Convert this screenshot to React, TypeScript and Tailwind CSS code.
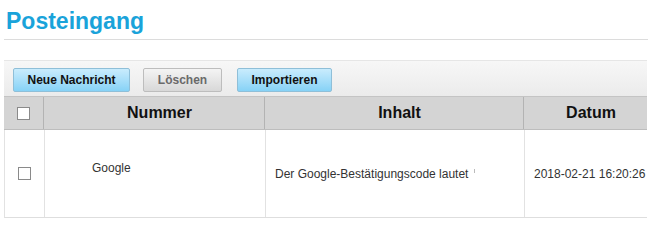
import React from "react";

export default function App() {
  return (
    <div className="w-[650px] h-[220px] bg-white overflow-hidden font-['Liberation_Sans',Arial,sans-serif]">
      <div className="pt-[7px] pl-[6px] h-[35px] text-[23px] leading-[28px] font-bold text-[#1aa3da]">
        Posteingang
      </div>
      <div className="mt-[4px] ml-[4px] mr-[2px] h-px bg-[#dcdcdc]" />
      <div className="mt-[20px] ml-[4px] mr-[3px]">
        <div className="h-[36px] flex items-start pt-[7px] pl-[9px] border-t border-[#e6e6e6] bg-gradient-to-b from-[#f7f7f7] to-[#ebebeb]">
          <button className="w-[117px] h-[24px] rounded-[2px] border border-[#8fbfd8] bg-gradient-to-b from-[#c9ecfd] to-[#86d2f6] text-[12px] font-bold text-[#111] leading-none">
            Neue Nachricht
          </button>
          <button className="ml-[13px] w-[79px] h-[24px] rounded-[2px] border border-[#bdbdbd] bg-gradient-to-b from-[#f4f4f4] to-[#d8d8d8] text-[12px] font-bold text-[#6a6a6a] leading-none">
            Löschen
          </button>
          <button className="ml-[15px] w-[95px] h-[24px] rounded-[2px] border border-[#8fbfd8] bg-gradient-to-b from-[#c9ecfd] to-[#86d2f6] text-[12px] font-bold text-[#111] leading-none">
            Importieren
          </button>
        </div>
        <div className="grid grid-cols-[40px_221px_259px_123px] h-[34px] bg-[#d4d4d4] border-t border-[#c4c4c4] border-b border-b-[#bdbdbd] text-[16px] font-bold text-[#111]">
          <div className="flex items-center justify-center border-r border-[#b3b3b3]">
            <span className="w-[13px] h-[13px] bg-white border border-[#8a8a8a]" />
          </div>
          <div className="flex items-center justify-center pl-[11px] border-r border-[#b3b3b3]">Nummer</div>
          <div className="flex items-center justify-center pl-[11px] border-r border-[#b3b3b3]">Inhalt</div>
          <div className="flex items-center justify-center pl-[11px]">Datum</div>
        </div>
        <div className="grid grid-cols-[40px_221px_259px_123px] h-[88px] border-b border-[#dedede] border-l border-l-[#e2e2e2] text-[12px] text-[#333]">
          <div className="flex items-center justify-center border-r border-[#e2e2e2]">
            <span className="w-[13px] h-[13px] bg-white border border-[#8a8a8a]" />
          </div>
          <div className="flex items-center pl-[47px] pb-[11px] border-r border-[#e2e2e2]">Google</div>
          <div className="flex items-center pl-[9px] border-r border-[#e2e2e2]">
            <span>Der Google-Bestätigungscode lautet</span>
            <span className="ml-[6px] mb-[6px] w-px h-[4px] bg-[#bbb]" />
          </div>
          <div className="flex items-center pl-[9px] whitespace-nowrap">2018-02-21 16:20:26</div>
        </div>
      </div>
    </div>
  );
}
